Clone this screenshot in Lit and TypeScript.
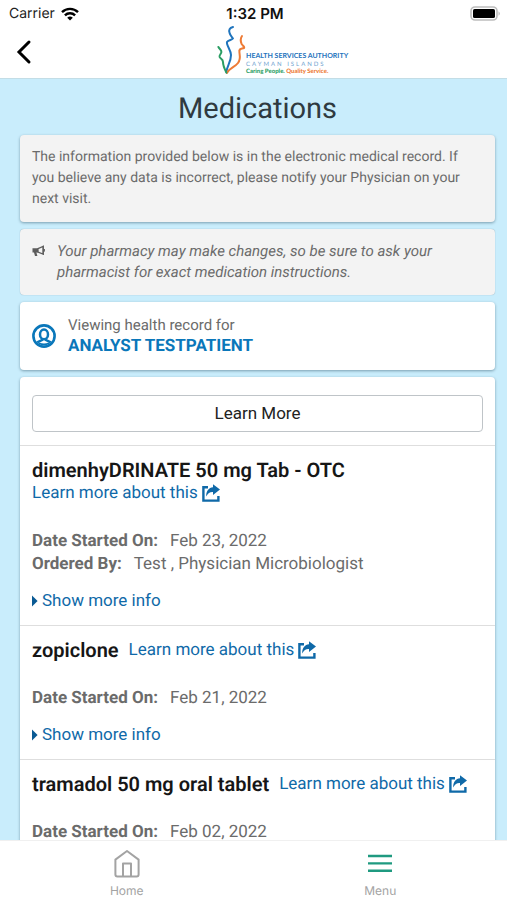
import { LitElement, html, css, svg } from "lit";
import { customElement, property } from "lit/decorators.js";

interface Medication {
  name: string;
  started: string;
  orderedBy?: string;
}

const medications: Medication[] = [
  { name: "dimenhyDRINATE 50 mg Tab - OTC", started: "Feb 23, 2022", orderedBy: "Test , Physician Microbiologist" },
  { name: "zopiclone", started: "Feb 21, 2022" },
  { name: "tramadol 50 mg oral tablet", started: "Feb 02, 2022" },
];

@customElement("medication-item")
export class MedicationItem extends LitElement {
  @property({ attribute: false }) med!: Medication;

  static styles = css`
    :host {
      display: block;
      border-top: 1px solid #dedede;
      padding: 13px 12px;
      font-size: 17px;
      line-height: 23px;
      color: #6b6b6b;
    }
    .head {
      display: flex;
      flex-wrap: wrap;
      column-gap: 10px;
      margin-bottom: 25px;
    }
    .name {
      margin: 0;
      font-size: 20px;
      line-height: 23px;
      font-weight: 600;
      color: #161616;
    }
    .link {
      display: inline-flex;
      align-items: center;
      gap: 4px;
      color: #0f69a8;
      text-decoration: none;
    }
    .facts {
      margin: 0 0 13px;
    }
    .fact {
      display: flex;
      gap: 12px;
    }
    dt {
      font-weight: 700;
    }
    dd {
      margin: 0;
    }
    .more {
      display: flex;
      align-items: center;
      gap: 4px;
      border: 0;
      padding: 0;
      background: none;
      font: inherit;
      color: #0f69a8;
    }
    svg {
      display: block;
      overflow: visible;
    }
  `;

  render() {
    const { name, started, orderedBy } = this.med;
    return html`
      <div class="head">
        <h2 class="name">${name}</h2>
        <a class="link" href="#">Learn more about this
          <svg width="18" height="18" viewBox="0 0 18 18" fill="none" aria-hidden="true">
            <path d="M6 2.2H1.4V15.6H16.4V11" stroke="#0f69a8" stroke-width="2.4" />
            <path d="M11 -0.8L18 4.6L11 10V7C8 6.8 6 8 4.2 11.4C4 6.2 6.8 2.4 11 2.2Z" fill="#0f69a8" />
          </svg>
        </a>
      </div>
      <dl class="facts">
        <div class="fact"><dt>Date Started On:</dt><dd>${started}</dd></div>
        ${orderedBy ? html`<div class="fact"><dt>Ordered By:</dt><dd>${orderedBy}</dd></div>` : null}
      </dl>
      <button class="more" type="button">
        <svg width="6" height="12" viewBox="0 0 6 12" aria-hidden="true"><path d="M0 0.5L5.6 6L0 11.5Z" fill="#0a5a94" /></svg>
        Show more info
      </button>
    `;
  }
}

const logo = svg`
  <g fill="none" stroke-linecap="round" stroke-linejoin="round">
    <path d="M13 2C9.5 3 8.5 5 9.6 8C10 10 11 11 13 13.5C12.4 15 8 15 7 17C6 20 11 25 11 30C11 37 7 41 6.4 47" stroke="#1f74bd" stroke-width="2" transform="translate(3 0)" />
    <path d="M25 11C23.6 13 23.4 16 24.6 19C26 21 28 22 27 23C25 24 22.6 23 22.4 26C22 29 24.6 33 21 38C18 42 12 43 10 48" stroke="#ee7b36" stroke-width="2" />
    <path d="M1.4 22C2.4 24 4.6 25 4.4 27C4.2 29 2 30 2.6 32C3.4 34 6 34 6 37C6 41 7.6 44 9.4 47.6" stroke="#2a9d63" stroke-width="2" />
  </g>
  <g font-family="Lato, 'Liberation Sans', sans-serif">
    <text x="29" y="33" font-size="7" font-weight="700" fill="#1f74bd">HEALTH SERVICES AUTHORITY</text>
    <text x="29" y="41" font-size="6" letter-spacing="2" fill="#6fa3cf">CAYMAN ISLANDS</text>
    <text x="29" y="48" font-size="6" font-weight="900" fill="#2a9d63">Caring People. <tspan fill="#ee7b36">Quality Service.</tspan></text>
  </g>`;

@customElement("app-root")
export class AppRoot extends LitElement {
  static styles = css`
    :host {
      display: flex;
      flex-direction: column;
      height: 100vh;
      overflow: hidden;
      background: #c9edfc;
      font-family: Roboto, "Liberation Sans", sans-serif;
      font-size: 15px;
      line-height: 21px;
      color: #6b6b6b;
      text-rendering: geometricPrecision;
    }
    svg {
      display: block;
    }
    .top {
      flex: none;
      background: #fff;
      border-bottom: 1px solid #c3dde6;
    }
    .status {
      display: grid;
      grid-template-columns: 1fr auto 1fr;
      align-items: center;
      height: 26px;
      padding: 1px 6px 0 9px;
      box-sizing: border-box;
      font-family: Inter, sans-serif;
      font-size: 14px;
      color: #222;
    }
    .carrier {
      display: flex;
      align-items: center;
      gap: 6px;
    }
    .time {
      font-size: 15px;
      font-weight: 600;
      color: #111;
    }
    .battery {
      justify-self: end;
    }
    .nav {
      display: grid;
      grid-template-columns: 4fr auto 3fr;
      height: 52px;
    }
    .back {
      justify-self: start;
      border: 0;
      background: none;
      padding: 0 16px;
    }
    .scroll {
      flex: 1;
      min-height: 0;
      overflow: hidden;
      padding: 11px 12px 0 20px;
    }
    h1 {
      margin: 0 0 7px;
      text-align: center;
      font-size: 29px;
      line-height: 38px;
      font-weight: 400;
      color: #2f3a40;
    }
    .card {
      margin: 0 0 7px;
      padding: 12px;
      border-radius: 4px;
      background: #fff;
      box-shadow: 0 1px 3px rgba(0, 40, 60, 0.4);
    }
    .grey {
      background: #f3f3f3;
    }
    .notice {
      font-size: 14px;
    }
    .note {
      display: flex;
      gap: 12px;
      box-shadow: 0 0 1px rgba(0, 40, 60, 0.4);
      font-style: italic;
    }
    .note svg {
      flex: none;
      margin-top: 4px;
    }
    .person {
      display: flex;
      align-items: center;
      gap: 12px;
      padding: 13px 12px;
    }
    .who {
      display: block;
      font-size: 17px;
      font-weight: 700;
      color: #0a77ba;
    }
    .list {
      padding: 0;
    }
    .learn {
      padding: 18px 12px 13px;
    }
    .learn button {
      width: 100%;
      height: 37px;
      border: 1px solid #bfc4c8;
      border-radius: 4px;
      background: #fff;
      font: inherit;
      font-size: 17px;
      color: #222;
    }
    .tabs {
      flex: none;
      display: grid;
      grid-template-columns: 1fr 1fr;
      background: #fff;
      border-top: 1px solid #f0f0f0;
    }
    .tab {
      display: flex;
      flex-direction: column;
      align-items: center;
      gap: 4px;
      padding: 8px 0 1px;
      font-family: Inter, sans-serif;
      font-size: 12px;
      line-height: 16px;
      color: #a3a3a3;
      text-decoration: none;
    }
    .logo {
      overflow: visible;
    }
  `;

  render() {
    return html`
      <header class="top">
        <div class="status">
          <span class="carrier">Carrier
            <svg width="18" height="14" viewBox="0 0 18 14" aria-hidden="true">
              <g fill="none" stroke="#000" stroke-width="2.4">
                <path d="M1 5.2A11.4 11.4 0 0 1 17 5.2" />
                <path d="M3.9 8.3A7.2 7.2 0 0 1 14.1 8.3" />
              </g>
              <path d="M9 13.6L6.2 10.8A4 4 0 0 1 11.8 10.8Z" />
            </svg>
          </span>
          <span class="time">1:32 PM</span>
          <svg class="battery" width="31" height="15" viewBox="0 0 31 15" aria-hidden="true">
            <rect x="1" y="1" width="26" height="13" rx="4" fill="#fff" stroke="#bdbdbd" stroke-width="1.6" />
            <rect x="3" y="3" width="22" height="9" rx="1.6" />
            <path d="M28.6 5.2Q30.8 7.5 28.6 9.8Z" fill="#aaa" />
          </svg>
        </div>
        <nav class="nav">
          <button class="back" type="button" aria-label="Back">
            <svg width="16" height="26" viewBox="0 0 16 26" fill="none" aria-hidden="true">
              <path d="M13 3L3 13L13 23" stroke="#000" stroke-width="3" stroke-linecap="round" />
            </svg>
          </button>
          <svg class="logo" width="128" height="52" viewBox="0 1 128 52" role="img" aria-label="Health Services Authority">${logo}</svg>
        </nav>
      </header>
      <main class="scroll">
        <h1>Medications</h1>
        <p class="card grey notice">The information provided below is in the electronic medical record. If you believe any data is incorrect, please notify your Physician on your next visit.</p>
        <p class="card grey note">
          <svg width="13" height="12" viewBox="0 0 13 12" aria-hidden="true">
            <path d="M0.5 3.2H6V7.4H4.4L5.4 11H3L2 7.4H0.5Z" fill="#5c5c5c" />
            <path d="M6 3.6L11 1.4V9L6 7Z" fill="none" stroke="#5c5c5c" stroke-width="1.3" />
            <path d="M11.4 0.6V10M12.4 4V6.6" stroke="#5c5c5c" stroke-width="1" />
          </svg>
          <span>Your pharmacy may make changes, so be sure to ask your pharmacist for exact medication instructions.</span>
        </p>
        <section class="card person">
          <svg width="24" height="24" viewBox="0 0 24 24" fill="none" stroke="#0a77ba" aria-hidden="true">
            <circle cx="12" cy="12" r="10.6" stroke-width="2.6" />
            <ellipse cx="12" cy="10.4" rx="4" ry="4.8" stroke-width="2.5" />
            <path d="M10 14.4V16L5.2 18.4M14 14.4V16L18.8 18.4" stroke-width="2.5" />
            <path d="M7 19.2Q12 21.6 17 19.2" stroke-width="1.6" />
          </svg>
          <div>Viewing health record for<span class="who">ANALYST TESTPATIENT</span></div>
        </section>
        <section class="card list">
          <div class="learn"><button type="button">Learn More</button></div>
          ${medications.map((m) => html`<medication-item .med=${m}></medication-item>`)}
        </section>
      </main>
      <nav class="tabs">
        <a class="tab" href="#">
          <svg width="26" height="30" viewBox="0 0 26 30" fill="none" stroke="#a3a3a3" stroke-width="2" stroke-linejoin="round" aria-hidden="true">
            <path d="M1.4 10.6L13 2L24.6 10.6V25.6Q24.6 27.6 22.6 27.6H3.4Q1.4 27.6 1.4 25.6Z" />
            <path d="M9 27.4V14.4H17V27.4" />
          </svg>
          Home
        </a>
        <a class="tab" href="#">
          <svg width="26" height="30" viewBox="0 0 26 30" stroke="#1f9a80" stroke-width="2.4" aria-hidden="true">
            <path d="M1 7H25M1 14.4H25M1 21.8H25" />
          </svg>
          Menu
        </a>
      </nav>
    `;
  }
}
